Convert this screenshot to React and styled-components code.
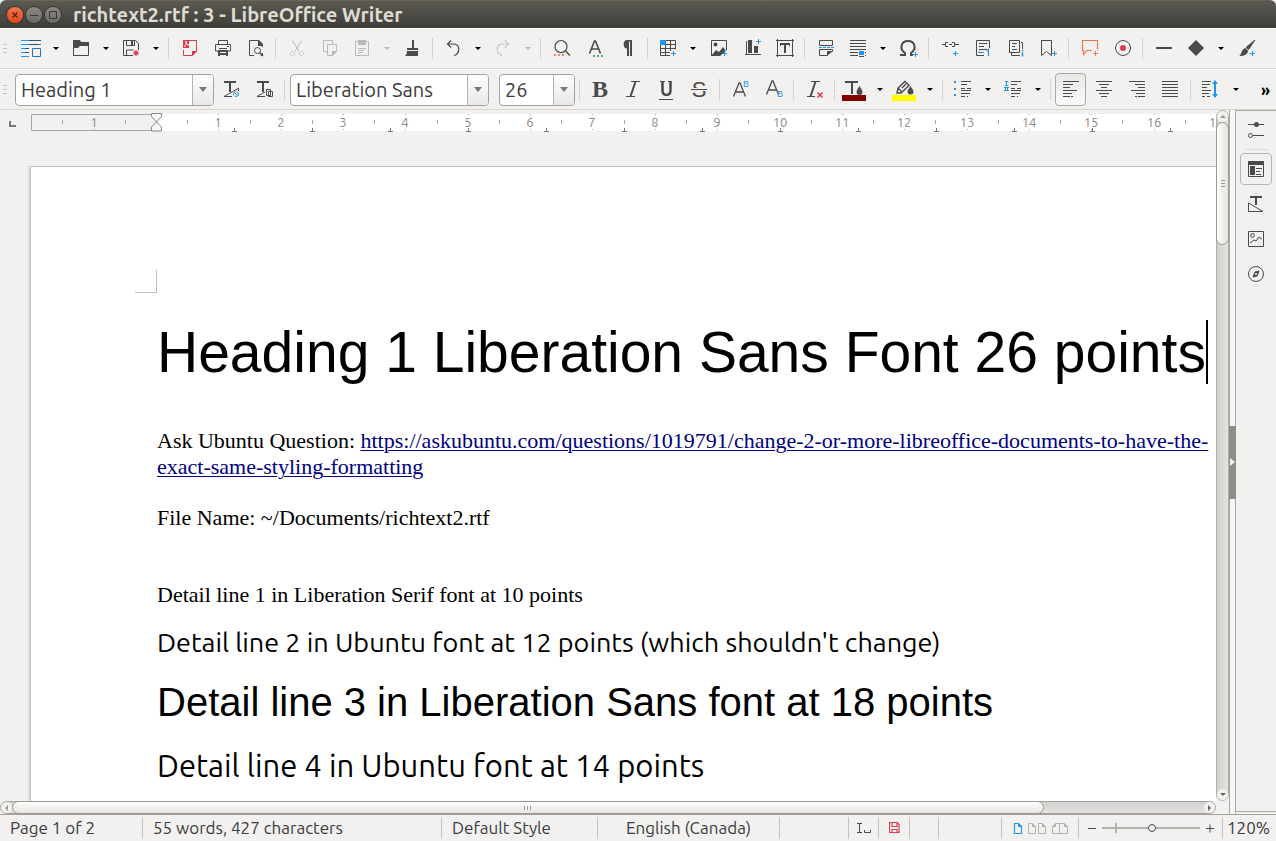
import React from "react";
import styled, { createGlobalStyle, css } from "styled-components";

const ink = "#4a4a4a";
const blue = "#1e96f0";
const red = "#dc3c50";
const pale = "#bcbab8";
const line = "#b4b2ae";
const ui = `Ubuntu, "Noto Sans", sans-serif`;

const Global = createGlobalStyle`
  * { box-sizing: border-box; }
  body { margin: 0; background: #f2f1ef; }
  button, input { font: inherit; color: inherit; padding: 0; margin: 0; border: 0; background: none; outline: 0; }
`;

const Window = styled.div`
  display: flex;
  flex-direction: column;
  height: 100vh;
  overflow: hidden;
  font-family: ${ui};
  color: #3c3c3c;
  background: #f2f1ef;
`;

/* ---------- title bar ---------- */
const TitleBar = styled.header`
  flex: none;
  display: flex;
  align-items: center;
  gap: 3px;
  height: 28px;
  padding-left: 7px;
  border-radius: 6px 6px 0 0;
  background: linear-gradient(#5b5952, #3e3d39);
  border-top: 1px solid #67655d;
`;
const WindowButton = styled.button`
  display: flex;
  width: 16px;
  height: 16px;
  border-radius: 50%;
  background: ${(p) => (p.$close ? "linear-gradient(#f4764a, #df4a16)" : "linear-gradient(#8b8982, #6b6963)")};
  box-shadow: 0 0 0 1px #35342f;
`;
const Title = styled.h1`
  margin: 0 0 0 9px;
  font-size: 20px;
  line-height: 26px;
  font-weight: 700;
  color: #dfdbd2;
  white-space: nowrap;
`;

/* ---------- toolbars ---------- */
const Toolbar = styled.div`
  flex: none;
  display: flex;
  align-items: center;
  height: 41px;
  border-top: 1px solid #fff;
  border-bottom: 1px solid #d8d5d2;
  overflow: hidden;
`;
const Handle = styled.span`
  flex: none;
  width: ${(p) => p.$w}px;
  height: 9px;
  padding-left: 3px;
  &::before {
    content: "";
    display: block;
    width: 4px;
    height: 9px;
    background: repeating-linear-gradient(#c6c4c1 0 1px, transparent 1px 4px);
  }
`;
const Tool = styled.button`
  flex: none;
  display: flex;
  align-items: center;
  justify-content: center;
  width: 33px;
  height: 33px;
  svg { overflow: visible; }
  ${(p) => p.$on && css`
    width: 31px;
    margin: 0 1px;
    border: 1px solid #aaa8a4;
    border-radius: 4px;
    background: linear-gradient(#e9e8e6, #fbfbfa);
  `}
`;
const Caret = styled.button`
  flex: none;
  display: flex;
  justify-content: center;
  align-items: center;
  width: 17px;
  height: 33px;
  &::before {
    content: "";
    border: 3px solid transparent;
    border-top-color: ${(p) => (p.disabled ? pale : "#000")};
    border-bottom: 0;
  }
`;
const Divider = styled.span`
  flex: none;
  width: 1px;
  height: 21px;
  margin: 0 3px 0 4px;
  background: #d4d1ce;
`;
const Combo = styled.div`
  flex: none;
  display: flex;
  width: ${(p) => p.$w}px;
  height: 32px;
  margin-left: ${(p) => p.$gap || 0}px;
  border: 1px solid #a5a29d;
  border-radius: 4px;
  background: #fff;
  font-size: 20px;
  input { flex: 1; min-width: 0; padding-left: 5px; line-height: 28px; }
  button {
    flex: none;
    display: flex;
    align-items: center;
    justify-content: center;
    width: 21px;
    border-left: 1px solid #b5b2ad;
    border-radius: 0 3px 3px 0;
    background: linear-gradient(#fdfdfd, #e9e8e6);
  }
  button::before {
    content: "";
    border: 4px solid transparent;
    border-top: 5px solid #777;
    border-bottom: 0;
  }
`;
const Overflow = styled.button`
  margin-left: auto;
  margin-right: 6px;
  color: #000;
  font-size: 16px;
  font-weight: 700;
  line-height: 20px;
`;

/* ---------- work area ---------- */
const Work = styled.div`
  flex: 1;
  min-height: 0;
  display: flex;
`;
const Column = styled.div`
  flex: 1;
  min-width: 0;
  display: flex;
  flex-direction: column;
`;
const RulerRow = styled.div`
  flex: none;
  display: flex;
  align-items: flex-start;
  height: 56px;
  padding-top: 2px;
  overflow: hidden;
`;
const TabKind = styled.button`
  flex: none;
  width: 31px;
  height: 20px;
  padding: 0 0 0 9px;
  svg { display: block; }
`;
const RulerScale = styled.div`
  flex: 1;
  min-width: 0;
  height: 22px;
  overflow: hidden;
  svg { display: block; }
`;
const Canvas = styled.main`
  flex: 1;
  min-height: 0;
  padding-left: 30px;
  overflow: hidden;
`;
const Page = styled.article`
  height: 100%;
  padding: 103px 0 0 104px;
  border: 1px solid #c1c0be;
  border-width: 1px 0 0 1px;
  background: #fff;
  box-shadow: 0 0 4px rgba(0, 0, 0, 0.25);
  color: #000;
`;
const MarginMark = styled.div`
  width: 22px;
  height: 23px;
  border: 1px solid #bcbcbc;
  border-width: 0 1px 1px 0;
`;
const Copy = styled.div`
  margin: 27px 0 0 22px;
`;
const Para = styled.p`
  margin: 0 0 ${(p) => p.$after}px;
  font-family: ${(p) => p.$font};
  font-size: ${(p) => p.$size}px;
  line-height: ${(p) => p.$line}px;
  white-space: ${(p) => (p.$wrap ? "normal" : "nowrap")};
`;
const Heading = styled(Para)`
  font-weight: 400;
`;
const TextCursor = styled.span`
  display: inline-block;
  width: 2px;
  height: 64px;
  background: #000;
  vertical-align: top;
`;
const DocLink = styled.a`
  color: #000080;
  text-decoration: underline;
  text-decoration-thickness: 1px;
  text-underline-offset: 2px;
`;

const serif = `"Liberation Serif", "Times New Roman", serif`;
const sans = `"Liberation Sans", Arial, sans-serif`;

/* ---------- scroll bars ---------- */
const VScroll = styled.div`
  flex: none;
  display: flex;
  flex-direction: column;
  width: 13px;
  margin-bottom: 13px;
  border: 1px solid #b1aeaa;
  border-radius: 7px;
  background: linear-gradient(90deg, #d3d1cf, #e4e3e1);
`;
const HScroll = styled.div`
  flex: none;
  display: flex;
  height: 13px;
  border: 1px solid #a5a29e;
  border-radius: 7px;
  background: linear-gradient(#d3d1cf, #e4e3e1);
`;
const ScrollStep = styled.button`
  flex: none;
  display: flex;
  align-items: center;
  justify-content: center;
  width: 11px;
  height: 11px;
  border-radius: 6px;
  background: #f2f1ef;
  &::before {
    content: "";
    border: 3px solid transparent;
    ${(p) => ({
      up: "border-bottom-color:#9a9894;border-top:0;",
      down: "border-top-color:#666;border-bottom:0;",
      left: "border-right-color:#9a9894;border-left:0;",
      right: "border-left-color:#666;border-right:0;",
    })[p.$dir]}
  }
`;
const Thumb = styled.div`
  display: flex;
  align-items: center;
  justify-content: center;
  flex: 0 0 ${(p) => p.$size};
  margin: ${(p) => (p.$v ? "0 -1px" : "-1px 0")};
  border: 1px solid #9c9994;
  border-radius: 7px;
  background: linear-gradient(${(p) => (p.$v ? "90deg," : "")} #fdfdfc, #e6e4e2);
  &::before {
    content: "";
    width: ${(p) => (p.$v ? 4 : 7)}px;
    height: ${(p) => (p.$v ? 7 : 4)}px;
    background: repeating-linear-gradient(${(p) => (p.$v ? "" : "90deg,")} #9a9894 0 1px, transparent 1px 3px);
  }
`;
const Gap = styled.span`
  flex: 1;
`;

/* ---------- side bar ---------- */
const Splitter = styled.div`
  flex: none;
  display: flex;
  align-items: center;
  width: 7px;
  border: 1px solid #aaa8a4;
  border-width: 0 1px 0 1px;
  background: #f8f7f6;
`;
const SplitterGrip = styled.button`
  flex: none;
  display: flex;
  align-items: center;
  width: 7px;
  height: 73px;
  margin-left: -1px;
  background: #8d8c88;
  &::before {
    content: "";
    margin-left: 1px;
    border: 4px solid transparent;
    border-left: 5px solid #f2f1ef;
    border-right: 0;
  }
`;
const SideBar = styled.nav`
  flex: none;
  display: flex;
  flex-direction: column;
  align-items: center;
  gap: 3px;
  width: 40px;
  margin-bottom: 2px;
  padding-top: 2px;
  border-top: 1px solid #aaa8a4;
  border-bottom: 1px solid #aaa8a4;
`;
const SideRule = styled.span`
  width: 23px;
  height: 1px;
  margin-top: 1px;
  background: #dedbd8;
`;
const SideTab = styled.button`
  display: flex;
  align-items: center;
  justify-content: center;
  width: 32px;
  height: 32px;
  border: 1px solid ${(p) => (p.$on ? "#b9b7b3" : "transparent")};
  border-radius: 4px;
`;

/* ---------- status bar ---------- */
const StatusBar = styled.footer`
  flex: none;
  display: grid;
  grid-template-columns: 143fr 299fr 156fr 182fr 69px 30px 31px 29px 63px 77px 144px 53px;
  align-items: center;
  height: 27px;
  border-top: 1px solid #a5a29e;
  font-size: 17px;
  line-height: 20px;
`;
const Cell = styled.div`
  display: flex;
  align-items: center;
  justify-content: ${(p) => (p.$center ? "center" : "flex-start")};
  gap: ${(p) => p.$gap || 0}px;
  height: 22px;
  min-width: 0;
  padding-left: ${(p) => (p.$center ? 0 : p.$pad || 10)}px;
  border-right: ${(p) => (p.$last ? 0 : 1)}px solid #c6c3bf;
  white-space: nowrap;
`;
const Plain = styled.button`
  display: flex;
  align-items: center;
`;
const Zoom = styled.input`
  appearance: none;
  width: 98px;
  height: 12px;
  background:
    linear-gradient(${line}, ${line}) 13px 1px / 2px 10px no-repeat,
    linear-gradient(${line}, ${line}) 0 5px / 100% 2px no-repeat;
  &::-webkit-slider-thumb {
    appearance: none;
    width: 8px;
    height: 8px;
    border: 1px solid ${ink};
    border-radius: 50%;
    background: #f2f1ef;
  }
`;

/* ---------- icons ---------- */
const Icon = ({ children, c = ink, w = 21, h = 21 }) => (
  <svg width={w} height={h} viewBox={`0 0 ${w} ${h}`} fill="none" stroke={c} strokeWidth="1" aria-hidden="true">
    {children}
  </svg>
);
const Plus = ({ x, y }) => <path d={`M${x - 2.5} ${y}h5M${x} ${y - 2.5}v5`} stroke={blue} />;
const Glyph = ({ x, y, s, f = sans, w = 400, c = ink, children }) => (
  <text x={x} y={y} fontSize={s} fontFamily={f} fontWeight={w} fill={c} stroke="none" textAnchor="middle">{children}</text>
);

const I = {
  styles: (
    <Icon c={blue}>
      <path d="M1 2.500h20M1 6.500h20M1 10.500h8M1 14.500h8M1 18.500h8" />
      <path d="M9 2.500h12M9 6.500h10M5 10.500h4M5 14.500h4" stroke="#2c5673" />
      <path d="M12.500 10.500h8v8h-8z" stroke="#1f78b4" />
    </Icon>
  ),
  open: <Icon><path d="M3 2h7l1 2h8v4h-9l-2 2H3z" fill={ink} stroke="none" /><path d="M3.500 6v11.500h15V7" /></Icon>,
  save: (
    <Icon>
      <path d="M13 17.500H3.500v-15h12l3 3V12M6.500 2.500v5h8v-5M6.500 17v-5h7" />
      <path d="M11 3h2v4h-2z" fill={ink} stroke="none" />
      <circle cx="16" cy="15" r="2.500" fill={red} stroke="#f0a0a8" />
    </Icon>
  ),
  pdf: (
    <Icon c={red}>
      <path d="M10 2.500h8.500v11l-4 4H5.500V12" />
      <path d="M5 2h6v8H5zM14 18v-5h5z" fill={red} stroke="none" />
      <path d="M6 9c2-2 3-4 2-6 0 3 1 4 3 4" stroke="#fff" />
    </Icon>
  ),
  print: (
    <Icon>
      <path d="M7.500 6V2.500h9V6M7 13H4.500V6.500h15V13H17" />
      <path d="M7 12h10v6h-2v-1H9v1H7z" fill={ink} stroke="none" /><path d="M8 10.500h8M16 8.500h2" /><path d="M9 14.500h6" stroke="#fff" />
    </Icon>
  ),
  preview: (
    <Icon>
      <path d="M10 17.500H5.500v-15h9l4 4V9M18.500 15v2.500H17" /><path d="M14 2h1l4 4v2h-5z" fill={ink} stroke="none" />
      <circle cx="13.500" cy="12.500" r="3" /><path d="M15.500 14.500l3.500 3.500" strokeWidth="1.500" />
    </Icon>
  ),
  cut: (
    <Icon c={pale}>
      <path d="M7.500 2.500l6.500 11M16.500 2.500l-6.500 11" /><circle cx="7.500" cy="15.500" r="2.200" strokeDasharray="2 1" /><circle cx="16.500" cy="15.500" r="2.200" strokeDasharray="2 1" />
    </Icon>
  ),
  copy: <Icon c={pale}><path d="M9 13.500H5.500v-11h9V6" /><path d="M9.500 6.500h9v7l-4 4h-5z" /><path d="M14 18v-5h5z" fill={pale} stroke="none" /></Icon>,
  paste: <Icon c={pale}><path d="M4.500 3.500h13v14h-13zM7 10.500h8M7 12.500h6M7 14.500h5" /><path d="M7 2h8v5H7z" fill={pale} stroke="none" /></Icon>,
  clone: <Icon><path d="M11 2h2v8h4v2H6v-2h5z" fill={ink} stroke="none" /><path d="M6 13h11v5H4c1.500-1 2-3 2-5z" fill={ink} stroke="none" /></Icon>,
  undo: <Icon><path d="M9 2.500L5.500 6 9 9.500M5.500 6H11c8 0 7 10 1 11.500" strokeWidth="1.200" /></Icon>,
  redo: <Icon c={pale}><path d="M13 2.500L16.500 6 13 9.500M16.500 6H11c-8 0-7 10-1 11.500" strokeWidth="1.200" strokeDasharray="3 1" /></Icon>,
  find: (
    <Icon>
      <circle cx="11" cy="8.500" r="6" strokeWidth="1.200" /><path d="M15.500 13l4.500 4.500" strokeWidth="1.500" />
      <path d="M4 17h11" stroke="#f08a6c" strokeWidth="2" strokeDasharray="2 2" />
    </Icon>
  ),
  spell: <Icon><path d="M6.500 15.500L11.500 3h1l5 12.500M8.500 11h7" strokeWidth="1.600" /><path d="M10 18h11" stroke="#4caf78" strokeWidth="2" strokeDasharray="2 2" /></Icon>,
  pilcrow: <Icon><path d="M16 2v16h-2V3.500h-1V18h-2v-7.500C6.500 10.500 6.500 2 11 2z" fill={ink} stroke="none" /></Icon>,
  table: (
    <Icon>
      <path d="M3.500 2.500h15v9M3.500 2.500v15H13M8.500 2v16M13.500 2v11M3 6.500h16M3 10.500h16M3 14.500h10" /><path d="M3 2h6v5H3z" fill={blue} stroke="none" /><Plus x={16.500} y={15.500} />
    </Icon>
  ),
  image: (
    <Icon>
      <path d="M13 17.500H4.500v-15h15V12" /><path d="M4 18l5-6 3 2 4-5 3 4-6 5z" fill={ink} stroke="none" /><circle cx="8.500" cy="6.500" r="2" fill={ink} stroke="none" /><Plus x={17.500} y={15.500} />
    </Icon>
  ),
  chart: (
    <Icon>
      <path d="M5 16.500h16M6.500 17V3" /><path d="M8 2h4v13H8zM14 8h4v7h-4z" fill={ink} stroke="none" /><Plus x={18.500} y={3.500} />
    </Icon>
  ),
  textbox: <Icon><path d="M3 2.500h18M3 17.500h18M4.500 1v18M19.500 1v18" /><path d="M7 5h10v3h-1V7h-3v8h-2V7H8v1H7z" fill={ink} stroke="none" /></Icon>,
  pagebreak: (
    <Icon>
      <path d="M5.500 7.500v-5h13v5zM5.500 11.500h13v2M5.500 11.500v6h8" /><path d="M13 18v-5h6z" fill={ink} stroke="none" /><path d="M5 9.500h15" stroke={blue} strokeDasharray="3 1" />
    </Icon>
  ),
  field: <Icon><path d="M3 2.500h16M3 5.500h16M3 8.500h16M3 11.500h16M3 14.500h8M3 17.500h8" /><path d="M12 13h5v4h-5z" fill={blue} stroke="none" /><path d="M18 14.500h1M18 17.500h1M12 18.500h5" /></Icon>,
  omega: <Icon><path d="M3 17h5v-2C2 11 4 3 11 3s9 8 3 12v2h2" strokeWidth="2" /><Plus x={18.500} y={16.500} /></Icon>,
  link: <Icon><path d="M4 6.500h4M10 4.500H7.500v4H10M11 6.500h3M14 4.500h2.500v4H14M17 6.500h4" /><Plus x={17.500} y={15.500} /></Icon>,
  footnote: <Icon><path d="M13 17.500H5.500v-15h13V10M8 5.500h8M8 8.500h5M8 11.500h8" /><path d="M7 14.500h6M16 13l1.500-1.500v6.500" stroke={blue} strokeWidth="1.200" /></Icon>,
  endnote: (
    <Icon>
      <path d="M5.500 2.500h10v12h-10zM17 4.500h1.500V11M7.500 15v2.500H16M8 5.500h5M8 8.500h3M8 11.500h5" /><path d="M18.500 12v1.500M18.500 14.500v4" stroke={blue} strokeWidth="1.500" />
    </Icon>
  ),
  bookmark: <Icon><path d="M4.500 2.500h10v15l-5-4-5 4z" /><Plus x={17.500} y={15.500} /></Icon>,
  comment: <Icon c="#f07850"><path d="M14 12.500H9l-3.500 4v-4h-1v-10h15v9" strokeWidth="1.200" /><path d="M15 15.500h5M17.500 13v5" /></Icon>,
  record: <Icon><circle cx="12" cy="10" r="7.500" /><circle cx="12" cy="10" r="3" fill={red} stroke="none" /></Icon>,
  hline: <Icon><path d="M4 10h16" strokeWidth="2" /></Icon>,
  diamond: <Icon><path d="M11 2l8 8-8 8-8-8z" fill={ink} stroke="none" /></Icon>,
  draw: <Icon><path d="M20 2l-6.500 9.500-2.500-2zM10 10.500l2.500 2c0 4-4 5-7.500 5 2-1 2-6 5-7z" fill={ink} stroke={ink} /><Plus x={17.500} y={15.500} /></Icon>,
  updStyle: <Icon><path d="M4 3h12M10 3v10" strokeWidth="2" /><path d="M4 17.500L19 9M4 17.500h8M18.500 9v3" /><circle cx="16" cy="15" r="2.500" stroke={blue} strokeDasharray="5 1" /><path d="M14 13l4 4" stroke={blue} /></Icon>,
  newStyle: <Icon><path d="M4 3h12M10 3v10" strokeWidth="2" /><path d="M4 17.500L12 13M4 17.500h8" /><path d="M13.500 10.500h4v6h-4zM15.500 12.500h4v5h-4z" fill="#f2f1ef" /></Icon>,
  bold: <Icon><Glyph x={11} y={18} s={24} f={serif} w={700}>B</Glyph></Icon>,
  italic: <Icon><path d="M9 2.500h9M4 17.500h9" /><path d="M13.500 2.500L8.500 17.500" strokeWidth="2" /></Icon>,
  underline: <Icon><path d="M5 2.500h5M13 2.500h4" /><path d="M7.500 2v9q0 5 4 5t4-5V2" strokeWidth="2.500" /><path d="M4 20.500h14" /></Icon>,
  strike: <Icon><Glyph x={11} y={18} s={22} f={sans}>S</Glyph><path d="M3 10.500h16" stroke="#f2f1ef" strokeWidth="3" /><path d="M3 10.500h16" /></Icon>,
  sup: <Icon><path d="M4.500 17.500L10 4h1l5.500 13.500M7 13h7" strokeWidth="1.300" /><Glyph x={17} y={8} s={9} c={blue}>B</Glyph></Icon>,
  sub: <Icon><path d="M4.500 15.500L10 2h1l5.500 13.500M7 11h7" strokeWidth="1.300" /><Glyph x={18} y={18} s={9} c={blue}>B</Glyph></Icon>,
  clear: <Icon><path d="M8 2.500h9M4 17.500h8" /><path d="M12.500 2.500L7.500 17.500" strokeWidth="2" /><path d="M14.500 13.500l5 5M19.500 13.500l-5 5" stroke={red} strokeWidth="1.500" /></Icon>,
  color: (
    <Icon>
      <path d="M1 3h13" strokeWidth="2" /><path d="M8 3v12" strokeWidth="2" /><path d="M15.500 7c1 2 3 4 3 6a3 3 0 0 1-6 0c0-2 2-4 3-6z" fill={ink} stroke="none" />
      <path d="M-2 16h24v6H-2z" fill="#800000" stroke="none" />
    </Icon>
  ),
  highlight: (
    <Icon>
      <path d="M3 14l1-5 7-6.500 4 4L7 14zM4 9l4 4M8 9l4-4" strokeWidth="1.400" /><path d="M16.500 7c1 2 3 4 3 5.500a3 3 0 0 1-6 0c0-1.500 2-3.500 3-5.500z" fill={ink} stroke="none" />
      <path d="M-2 16h24v6H-2z" fill="#ffff00" stroke="none" />
    </Icon>
  ),
  bullets: <Icon><path d="M9 2.500h10M9 5.500h6M9 9.500h4M15 9.500h4M9 11.500h10M9 14.500h9M9 17.500h4M15 17.500h1" /><path d="M2 3h2M2 10h2M2 16h2" stroke={blue} strokeWidth="2" /></Icon>,
  numbers: <Icon><path d="M9 2.500h10M9 5.500h6M9 9.500h4M15 9.500h4M9 11.500h10M9 14.500h9M9 17.500h4M15 17.500h1" /><path d="M3 2.500h3M4.500 2.500v4M3 6.500h3M2 8.500h5M3.500 8.500v3M5.500 8.500v3M2 11.500h5" stroke={blue} /></Icon>,
  left: <Icon><path d="M3 2.500h16M3 5.500h10M3 8.500h7M3 11.500h14M3 14.500h9M3 17.500h7M11 17.500h2" /></Icon>,
  center: <Icon><path d="M3 2.500h16M6 5.500h10M8 8.500h6M3 11.500h16M6 14.500h10M8 17.500h6" /></Icon>,
  right: <Icon><path d="M3 2.500h16M9 5.500h10M12 8.500h7M5 11.500h14M10 14.500h9M9 17.500h2M12 17.500h7" /></Icon>,
  justify: <Icon><path d="M3 2.500h16M3 5.500h16M3 8.500h16M3 11.500h16M3 14.500h16M3 17.500h16" /></Icon>,
  spacing: <Icon><path d="M2 2.500h9M2 5.500h8M2 8.500h5M2 11.500h9M2 14.500h7M2 17.500h3M7 17.500h3" /><path d="M15 4v13" stroke={blue} strokeWidth="2" /><path d="M15 1l3 4h-6zM15 19l3-4h-6z" fill={blue} stroke="none" /></Icon>,
  props: <Icon><path d="M2 5.500h16M7 16.500h11" /><circle cx="10.500" cy="5.500" r="2.500" fill={ink} stroke="none" /><circle cx="4.500" cy="16.500" r="2" /></Icon>,
  panel: <Icon><path d="M2.500 2.500h15v15h-15zM10 9.500h6M10 12.500h4M10 15.500h5" /><path d="M2 2h16v4H2zM4 7h5v9H4z" fill={ink} stroke="none" /></Icon>,
  sStyle: <Icon><path d="M4 3h12M10 3v8" strokeWidth="2" /><path d="M2.500 9v8.500H17L2.500 9z" /></Icon>,
  gallery: <Icon><path d="M2.500 2.500h15v15h-15z" /><circle cx="6.500" cy="6.500" r="1.900" /><path d="M4 14l4-3 2 1 3-4 3 2" /></Icon>,
  compass: <Icon><circle cx="10" cy="10" r="7.500" /><path d="M13 7l-2 5-4 1 2-5z" fill={ink} /><circle cx="10" cy="10" r="1" fill="#f2f1ef" stroke="none" /></Icon>,
};

const row1 = [
  ["styles", "Show Styles"], "v", ["open", "Open"], "v", ["save", "Save"], "v", "|",
  ["pdf", "Export as PDF"], ["print", "Print"], ["preview", "Print Preview"], "|",
  ["cut", "Cut"], ["copy", "Copy"], ["paste", "Paste"], "x", ["clone", "Clone Formatting"], "|",
  ["undo", "Undo"], "v", ["redo", "Redo"], "x", "|",
  ["find", "Find and Replace"], ["spell", "Spelling"], ["pilcrow", "Formatting Marks"], "|",
  ["table", "Insert Table"], "v", ["image", "Insert Image"], ["chart", "Insert Chart"], ["textbox", "Insert Text Box"], "|",
  ["pagebreak", "Insert Page Break"], ["field", "Insert Field"], "v", ["omega", "Special Character"], "|",
  ["link", "Insert Hyperlink"], ["footnote", "Insert Footnote"], ["endnote", "Insert Endnote"], ["bookmark", "Insert Bookmark"], "|",
  ["comment", "Insert Comment"], ["record", "Track Changes"], "|",
  ["hline", "Insert Line"], ["diamond", "Basic Shapes"], "v", ["draw", "Draw Functions"],
];
const row2a = [["updStyle", "Update Style"], ["newStyle", "New Style"], "|"];
const row2b = [
  "|", ["bold", "Bold"], ["italic", "Italic"], ["underline", "Underline"], ["strike", "Strikethrough"], "|",
  ["sup", "Superscript"], ["sub", "Subscript"], "|", ["clear", "Clear Formatting"], "|",
  ["color", "Font Color"], "v", ["highlight", "Highlighting"], "v", "|",
  ["bullets", "Bullets"], "v", ["numbers", "Numbering"], "v", "|",
  ["left", "Align Left", true], ["center", "Center"], ["right", "Align Right"], ["justify", "Justified"], "|",
  ["spacing", "Line Spacing"], "v",
];

const Tools = ({ items }) =>
  items.map((it, i) => {
    if (it === "|") return <Divider key={i} />;
    if (it === "v" || it === "x") return <Caret key={i} disabled={it === "x"} aria-label="More options" />;
    return <Tool key={i} $on={it[2]} aria-label={it[1]}>{I[it[0]]}</Tool>;
  });

const ComboBox = ({ label, value, ...rest }) => (
  <Combo {...rest}>
    <input aria-label={label} defaultValue={value} />
    <button aria-label={`${label} list`} />
  </Combo>
);

/* Ruler: the zero point is 125px in; a unit is 62.35px wide, a tab stop 78px. */
const Ruler = () => {
  const zero = 125;
  const at = (n) => Math.round(zero + n * 62.35);
  const units = Array.from({ length: 17 }, (_, i) => i + 1);
  return (
    <svg width="100%" height="22" fill="none" stroke="#a8a6a3" aria-label="Ruler">
      <rect x="125" y="2" width="100%" height="17" fill="#fff" stroke="none" />
      <path d="M.5 2.500h125v16H.5z" />
      <path d={`M${at(-0.5) + 0.5} 8v4M${at(-1.5) + 0.5} 8v4`} />
      {[-1, ...units].map((n) => (
        <g key={n}>
          <text x={at(n)} y="15" fontSize="13" fontFamily={ui} fill="#8a8886" stroke="none" textAnchor="middle">{Math.abs(n)}</text>
          <path d={`M${at(n) + 0.5} 2v1M${at(n) + 0.5} 17v1`} />
          {n > 0 && <path d={`M${at(n - 0.5) + 0.5} 8v4`} />}
        </g>
      ))}
      {units.map((n) => {
        const x = zero + n * 78 + 0.5;
        return <path key={n} d={`M${x - 2.5} 19.500h5M${x} 16v4`} stroke="#777" />;
      })}
      <path d="M120.500 1.500h10v3l-5 5.500 5 5v4h-10v-4l5-5-5-5.500z" fill="#f8f8f7" stroke="#888" />
    </svg>
  );
};

const status = ["Page 1 of 2", "55 words, 427 characters", "Default Style"];

export default function App() {
  return (
    <Window>
      <Global />
      <TitleBar>
        <WindowButton $close aria-label="Close">
          <svg width="16" height="16" stroke="#5c2a14" strokeWidth="1.500"><path d="M5.500 5.500l5 5M10.500 5.500l-5 5" /></svg>
        </WindowButton>
        <WindowButton aria-label="Minimize">
          <svg width="16" height="16" stroke="#3a3935"><path d="M4 8.500h8" /></svg>
        </WindowButton>
        <WindowButton aria-label="Maximize">
          <svg width="16" height="16" stroke="#3a3935" fill="none"><path d="M4.500 4.500h7v7h-7z" /></svg>
        </WindowButton>
        <Title>richtext2.rtf : 3 - LibreOffice Writer</Title>
      </TitleBar>

      <Toolbar role="toolbar" aria-label="Standard">
        <Handle $w={14} />
        <Tools items={row1} />
      </Toolbar>
      <Toolbar role="toolbar" aria-label="Formatting">
        <Handle $w={15} />
        <ComboBox label="Paragraph style" value="Heading 1" $w={199} />
        <Tools items={row2a} />
        <ComboBox label="Font name" value="Liberation Sans" $w={199} $gap={2} />
        <ComboBox label="Font size" value="26" $w={76} $gap={10} />
        <Tools items={row2b} />
        <Overflow aria-label="More controls">»</Overflow>
      </Toolbar>

      <Work>
        <Column>
          <RulerRow>
            <TabKind aria-label="Tab type">
              <svg width="8" height="16" stroke="#777" strokeWidth="2" fill="none"><path d="M1 7v5h6" /></svg>
            </TabKind>
            <RulerScale><Ruler /></RulerScale>
          </RulerRow>
          <Canvas>
            <Page>
              <MarginMark />
              <Copy>
                <Heading as="h2" $font={sans} $size={57} $line={64} $after={44}>
                  Heading 1 Liberation Sans Font 26 points<TextCursor />
                </Heading>
                <Para $font={serif} $size={22} $line={26} $after={25} $wrap>
                  Ask Ubuntu Question:{" "}
                  <DocLink href="https://askubuntu.com/questions/1019791/change-2-or-more-libreoffice-documents-to-have-the-exact-same-styling-formatting">
                    https://askubuntu.com/questions/1019791/change-2-or-more-libreoffice-documents-to-have-the-exact-same-styling-formatting
                  </DocLink>
                </Para>
                <Para $font={serif} $size={22} $line={26} $after={51}>File Name: ~/Documents/richtext2.rtf</Para>
                <Para $font={serif} $size={22} $line={26} $after={16}>Detail line 1 in Liberation Serif font at 10 points</Para>
                <Para $font={ui} $size={27} $line={36} $after={19}>Detail line 2 in Ubuntu font at 12 points (which shouldn't change)</Para>
                <Para $font={sans} $size={40} $line={46} $after={19}>Detail line 3 in Liberation Sans font at 18 points</Para>
                <Para $font={ui} $size={31} $line={44} $after={0}>Detail line 4 in Ubuntu font at 14 points</Para>
              </Copy>
            </Page>
          </Canvas>
          <HScroll>
            <ScrollStep $dir="left" aria-label="Scroll left" />
            <Thumb $size="85%" />
            <Gap />
            <ScrollStep $dir="right" aria-label="Scroll right" />
          </HScroll>
        </Column>
        <VScroll>
          <ScrollStep $dir="up" aria-label="Scroll up" />
          <Thumb $v $size="123px" />
          <Gap />
          <ScrollStep $dir="down" aria-label="Scroll down" />
        </VScroll>
        <Splitter><SplitterGrip aria-label="Hide sidebar" /></Splitter>
        <SideBar>
          <SideTab aria-label="Sidebar settings">{I.props}</SideTab>
          <SideRule />
          <SideTab $on aria-label="Properties">{I.panel}</SideTab>
          <SideTab aria-label="Styles">{I.sStyle}</SideTab>
          <SideTab aria-label="Gallery">{I.gallery}</SideTab>
          <SideTab aria-label="Navigator">{I.compass}</SideTab>
        </SideBar>
      </Work>

      <StatusBar>
        {status.map((s) => <Cell key={s}>{s}</Cell>)}
        <Cell $center>English (Canada)</Cell>
        <Cell />
        <Cell $center>
          <Icon w={15} h={12}><path d="M1 1.500h5M3.500 1.500v9M1 10.500h5M8.500 8v2.500h6V8" /></Icon>
        </Cell>
        <Cell $center>
          <Plain aria-label="Unsaved changes">
            <Icon c={red} w={11} h={12}><path d="M.5.5h7.500l2 2v8H.500zM3 .5v4h5v-4M3 10.500v-3h5v3" strokeWidth="1.200" /></Icon>
          </Plain>
        </Cell>
        <Cell />
        <Cell />
        <Cell $center $gap={5}>
          <Plain aria-label="Single page"><Icon c={blue} w={10} h={11}><path d="M1.500.5h4l3 3v7h-7z" strokeWidth="1.200" /><path d="M5 0l4 4H5z" fill={blue} stroke="none" /></Icon></Plain>
          <Plain aria-label="Multiple pages"><Icon c={line} w={19} h={11}><path d="M.5.5h4l3 3v7h-7zM10.500.5h4l3 3v7h-7z" /><path d="M4 0l4 4H4zM14 0l4 4h-4z" fill={line} stroke="none" /></Icon></Plain>
          <Plain aria-label="Book view"><Icon c={line} w={16} h={11}><path d="M.5 10.500v-7l3-3h4v10zM7.500.500h5l3 3v7h-8z" /><path d="M4 0v4H0zM12 0l4 4h-4z" fill={line} stroke="none" /></Icon></Plain>
        </Cell>
        <Cell $center $gap={6}>
          <Plain aria-label="Zoom out"><Icon w={8} h={9}><path d="M0 4.500h8" /></Icon></Plain>
          <Zoom type="range" aria-label="Zoom" min="0" max="100" defaultValue="52" />
          <Plain aria-label="Zoom in"><Icon w={8} h={9}><path d="M0 4.500h8M4 .5v8" /></Icon></Plain>
        </Cell>
        <Cell $pad={4} $last>120%</Cell>
      </StatusBar>
    </Window>
  );
}
